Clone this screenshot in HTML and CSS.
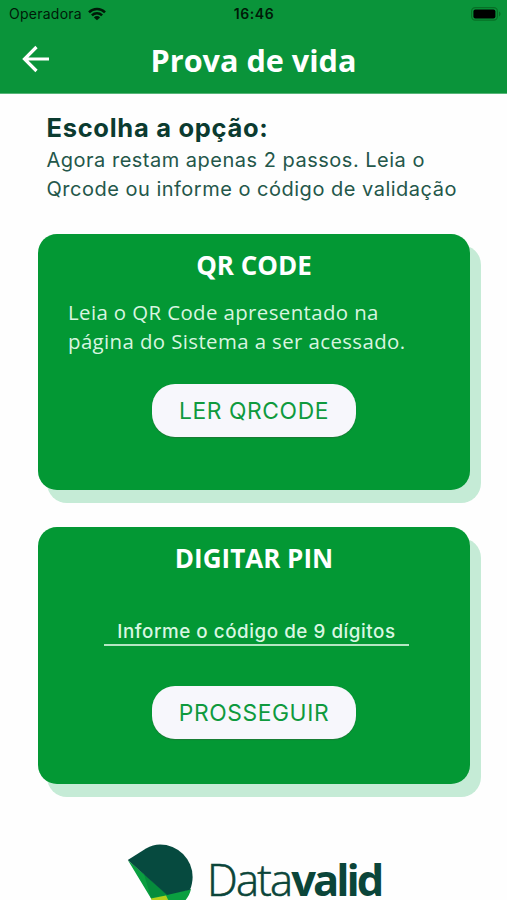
FILE: index.html
```html
<!DOCTYPE html>
<html lang="pt-BR">

<head>
  <meta charset="utf-8">
  <meta name="viewport" content="width=device-width, initial-scale=1">
  <title>Prova de vida</title>
  <link rel="stylesheet" href="styles.css">
</head>

<body>
	<header class="header">
		<div class="status">
			<div class="carrier">
				<span>Operadora</span>
				<svg class="wifi" width="18" height="14" viewBox="0 0 18 14">
					<g fill="none" stroke="#001a08" stroke-width="2.5">
						<path d="M1 5.3a11.3 11.3 0 0 1 16 0"/>
						<path d="M3.9 8.3a7.2 7.2 0 0 1 10.2 0"/>
					</g>
					<path fill="#001a08" d="M9 13.3L5.9 10.4a4.4 4.4 0 0 1 6.2 0z"/>
				</svg>
			</div>
			<span class="time">16:46</span>
			<svg class="battery" width="30" height="14" viewBox="0 0 30 14">
				<rect x=".6" y=".6" width="25.8" height="12.6" rx="3.6" fill="none" stroke="#077026" stroke-width="1.2"/>
				<rect x="2.4" y="2.4" width="22" height="9" rx="2"/>
				<path d="M28 4.6c2 .8 2 4 0 4.8z" fill="#077026"/>
			</svg>
		</div>
		<div class="navbar">
			<svg class="back" width="28" height="28" viewBox="0 0 28 28">
				<path d="M27 14H3M14.5 2L2.5 14l12 12" fill="none" stroke="#fff" stroke-width="3.2"/>
			</svg>
			<h1>Prova de vida</h1>
		</div>
	</header>

	<div class="intro">
		<h2>Escolha a opção:</h2>
		<p>Agora restam apenas 2 passos. Leia o<br>Qrcode ou informe o código de validação</p>
	</div>

	<div class="card">
		<h3>QR CODE</h3>
		<p class="card-text">Leia o QR Code apresentado na<br>página do Sistema a ser acessado.</p>
		<button type="button" class="butn read">LER QRCODE</button>
	</div>

	<div class="card">
		<h3>DIGITAR PIN</h3>
		<input type="text" class="pin" placeholder="Informe o código de 9 dígitos">
		<button type="button" class="butn next">PROSSEGUIR</button>
	</div>

	<footer class="logo">
		<svg class="symbol" width="68" height="68" viewBox="0 0 68 68">
			<path fill="#0a9f40" d="M.8 16L40 50 64 45C61 58 50 66 33 66h-2z"/>
			<path fill="#068c3c" d="M17 30L40 51 24 54z"/>
			<path fill="#b5cf1c" d="M24 54.5L39 51.5 46 66H31z"/>
			<path fill="#064a3f" d="M.8 16L19 4.500Q26 .4 33 .4A32.600 32.600 0 0 1 65.600 33C65.600 38 64.500 42 63 45.800L40 51z"/>
		</svg>
		<div class="logo-name">Data<b>valid</b></div>
	</footer>
</body>

</html>
```

FILE: styles.css
```css
body {
	background-color: #fefefe;
	margin: 0;
	height: 900px;
	overflow: hidden;
	font-family: Inter, "Liberation Sans", sans-serif;
}

h1,h2,h3,p {
	margin: 0;
}

.header {
	height: 93px;
	background: #0a943a;
	border-bottom: 1px solid #57b578;
}

.status {
	display: grid;
	grid-template-columns: 1fr auto 1fr;
	align-items: center;
	height: 27px;
	padding: 0 6px 0 9px;
	color: #001a08;
	font-size: 14px;
}

.carrier {
	display: flex;
	align-items: center;
	gap: 6px;
	letter-spacing: 0.25px;
}

.time {
	margin-left: -2px;
	font-weight: 600;
	letter-spacing: 0.6px;
}

.battery {
	justify-self: end;
}

.navbar {
	display: grid;
	grid-template-columns: 28px 1fr 28px;
	align-items: center;
	height: 66px;
	padding: 0 22px;
}

.back {
	margin-bottom: 3px;
}

h1 {
	text-align: center;
	font-family: "Open Sans", sans-serif;
	font-size: 30.6px;
	line-height: 67px;
	color: #fff;
}

.intro {
	box-sizing: border-box;
	padding: 17px 0 0 46.5px;
	height: 139.5px;
	color: #0b3b30;
	white-space: nowrap;
}

h2 {
	font-size: 25.5px;
	line-height: 33px;
	letter-spacing: 0.7px;
}

.intro p {
	margin-top: 2px;
	font-size: 20px;
	line-height: 29px;
	letter-spacing: 0.5px;
	color: #24574a;
}

.card {
	box-sizing: border-box;
	width: 432px;
	height: 256.5px;
	margin: 0 0 37px 38px;
	padding-top: 13px;
	border-radius: 19px;
	background: #039834;
	box-shadow: 10px 12px 0 1px #c5ebd6;
	display: flex;
	flex-direction: column;
	align-items: center;
}

h3 {
	font-family: "Open Sans", sans-serif;
	font-size: 26px;
	line-height: 36px;
	color: #fff;
}

.card-text {
	align-self: stretch;
	padding-left: 30px;
	margin-top: 15px;
	font-family: "Open Sans", sans-serif;
	font-size: 20.4px;
	line-height: 29px;
	letter-spacing: 0.4px;
	color: #d9f5e0;
	white-space: nowrap;
}

.butn {
	width: 204px;
	height: 52.5px;
	padding: 0;
	border: 0;
	border-radius: 23px;
	background: #f7f7fc;
	box-shadow: 0 1px 1px #1b7a35;
	font-family: Inter, sans-serif;
	font-size: 22.8px;
	letter-spacing: 0.6px;
	color: #0f9a3e;
}

.read {
	margin-top: 28.5px;
}

.pin {
	box-sizing: border-box;
	width: 305px;
	height: 31px;
	margin: 39px 0 0 5px;
	padding: 3px 0 0;
	border: 0;
	border-bottom: 2px solid #b5e6c3;
	background: none;
	font-family: Inter, sans-serif;
	font-size: 18.8px;
	font-weight: 500;
	letter-spacing: 0.55px;
	text-align: center;
}

.pin::placeholder {
	color: #d9f7e2;
}

.next {
	margin-top: 40px;
}

.logo {
	display: flex;
	margin: 60px 0 0 127px;
	color: #0b4539;
}

.logo-name {
	margin: 6px 0 0 12px;
	font-family: "Open Sans", sans-serif;
	font-size: 43.5px;
	font-weight: 300;
	line-height: 60px;
	letter-spacing: -1.8px;
	-webkit-text-stroke: 0.6px #0b4539;
}

.logo-name b {
	font-weight: 700;
	letter-spacing: -3px;
	-webkit-text-stroke: 0;
}
```
